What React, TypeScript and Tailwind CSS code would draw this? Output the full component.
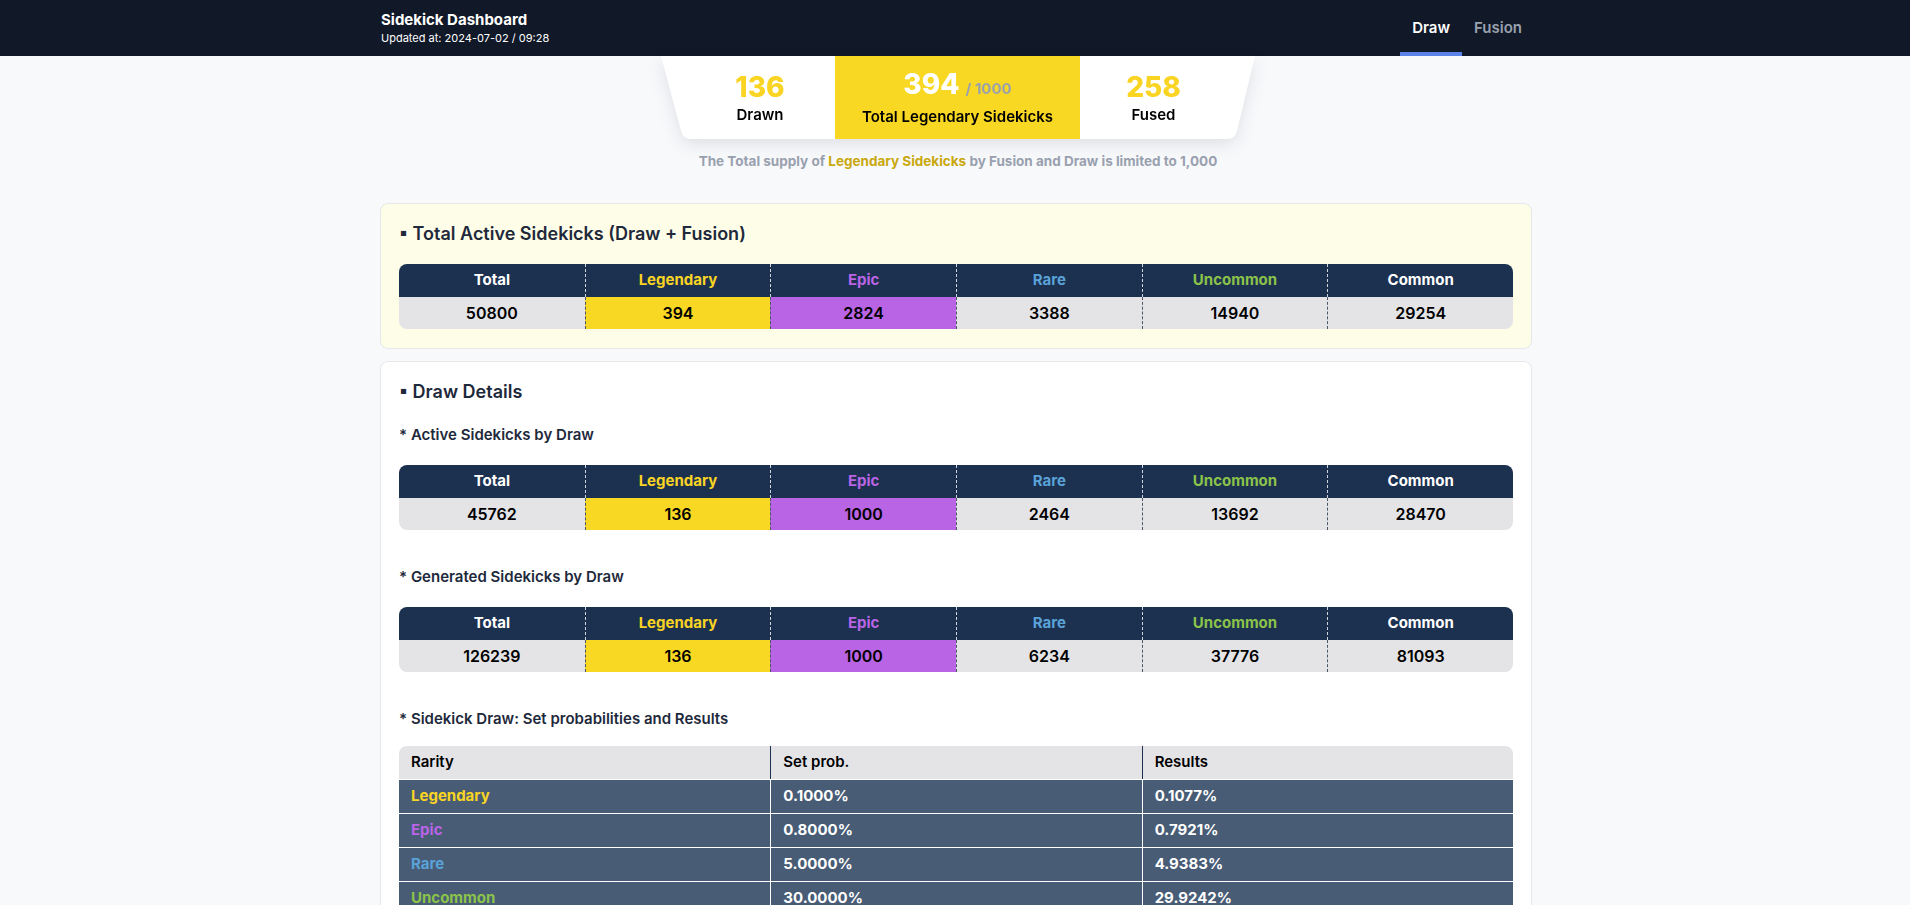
import React from 'react';

type Row = { total: number; legendary: number; epic: number; rare: number; uncommon: number; common: number };

const totalActive: Row = { total: 50800, legendary: 394, epic: 2824, rare: 3388, uncommon: 14940, common: 29254 };
const activeByDraw: Row = { total: 45762, legendary: 136, epic: 1000, rare: 2464, uncommon: 13692, common: 28470 };
const generatedByDraw: Row = { total: 126239, legendary: 136, epic: 1000, rare: 6234, uncommon: 37776, common: 81093 };

const probabilities = [
  { rarity: 'Legendary', color: 'text-[#f9d423]', set: '0.1000%', result: '0.1077%' },
  { rarity: 'Epic', color: 'text-[#b964e6]', set: '0.8000%', result: '0.7921%' },
  { rarity: 'Rare', color: 'text-[#5aa2d8]', set: '5.0000%', result: '4.9383%' },
  { rarity: 'Uncommon', color: 'text-[#8bc34a]', set: '30.0000%', result: '29.9242%' },
  { rarity: 'Common', color: 'text-white', set: '64.1000%', result: '64.2377%' },
];

function RarityTable({ row }: { row: Row }) {
  const head = 'flex h-[33px] items-center justify-center text-[15px] font-bold';
  const cell = 'flex h-[32px] items-center justify-center text-base font-semibold text-black';
  return (
    <div className="overflow-hidden rounded-lg">
      <div className="grid grid-cols-6 bg-[#1c3150]">
        <div className={`${head} text-white`}>Total</div>
        <div className={`${head} border-l border-dashed border-white/80 text-[#f9d423]`}>Legendary</div>
        <div className={`${head} border-l border-dashed border-white/80 text-[#b964e6]`}>Epic</div>
        <div className={`${head} border-l border-dashed border-white/80 text-[#5aa2d8]`}>Rare</div>
        <div className={`${head} border-l border-dashed border-white/80 text-[#8bc34a]`}>Uncommon</div>
        <div className={`${head} border-l border-dashed border-white/80 text-white`}>Common</div>
      </div>
      <div className="grid grid-cols-6 bg-[#e4e4e7]">
        <div className={cell}>{row.total}</div>
        <div className={`${cell} border-l border-dashed border-gray-600 bg-[#f9d823]`}>{row.legendary}</div>
        <div className={`${cell} border-l border-dashed border-gray-600 bg-[#b964e4]`}>{row.epic}</div>
        <div className={`${cell} border-l border-dashed border-gray-600`}>{row.rare}</div>
        <div className={`${cell} border-l border-dashed border-gray-600`}>{row.uncommon}</div>
        <div className={`${cell} border-l border-dashed border-gray-600`}>{row.common}</div>
      </div>
    </div>
  );
}

function SubHeading({ children, className = 'mb-5' }: { children: React.ReactNode; className?: string }) {
  return <h3 className={`text-[15px] font-semibold leading-5 text-[#1e293b] ${className}`}>* {children}</h3>;
}

export default function App() {
  return (
    <div className="min-h-screen bg-[#f8f9fb] font-['Inter',sans-serif] text-[#1e293b]">
      <header className="h-14 bg-[#111827]">
        <div className="mx-auto flex h-full w-[1158px] items-stretch justify-between pl-[5px]">
          <div className="flex flex-col justify-center">
            <h1 className="text-[15px] font-bold leading-5 text-white">Sidekick Dashboard</h1>
            <p className="text-[11px] leading-4 text-white">Updated at: 2024-07-02 / 09:28</p>
          </div>
          <nav className="flex items-stretch">
            <button className="flex items-center border-b-4 border-[#5a82e8] px-3 pt-1 text-[15px] font-semibold text-white">
              Draw
            </button>
            <button className="flex items-center border-b-4 border-transparent px-3 pt-1 text-[15px] font-semibold text-gray-400">
              Fusion
            </button>
          </nav>
        </div>
      </header>

      <div className="flex flex-col items-center">
        <div className="ml-[6px] drop-shadow-[0_6px_8px_rgba(15,23,42,0.10)]">
          <div className="grid h-[83px] w-[594px] grid-cols-[174px_245px_175px] bg-white [clip-path:path('M0_0H594L576_75Q574_83_566_83H30Q22_83_20_75Z')]">
            <div className="flex flex-col items-center justify-center pl-6">
              <span className="text-[28px] font-extrabold leading-8 text-[#f9d423]">136</span>
              <span className="mt-0.5 text-[15px] font-semibold leading-5 text-black">Drawn</span>
            </div>
            <div className="flex flex-col items-center justify-center bg-[#f9d823]">
              <span className="leading-8">
                <span className="text-[28px] font-extrabold text-white">394</span>
                <span className="ml-1.5 text-[15px] font-bold text-gray-400">/ 1000</span>
              </span>
              <span className="mt-0.5 text-[15px] font-semibold leading-5 text-black">Total Legendary Sidekicks</span>
            </div>
            <div className="flex flex-col items-center justify-center pr-7">
              <span className="text-[28px] font-extrabold leading-8 text-[#f9d423]">258</span>
              <span className="mt-0.5 text-[15px] font-semibold leading-5 text-black">Fused</span>
            </div>
          </div>
        </div>
        <p className="mt-3 ml-[6px] text-[13.5px] font-bold leading-5 text-gray-400">
          The Total supply of <span className="text-[#c9a80f]">Legendary Sidekicks</span> by Fusion and Draw is limited to 1,000
        </p>
      </div>

      <main className="mx-auto mt-8 w-[1154px] pb-10 pl-0.5">
        <section className="rounded-lg border border-gray-200 bg-[#fefde8] px-[18px] pb-[19px] pt-4">
          <h2 className="mb-4 text-lg font-semibold leading-7 text-[#1e293b]">▪ Total Active Sidekicks (Draw + Fusion)</h2>
          <RarityTable row={totalActive} />
        </section>

        <section className="mt-3 rounded-lg border border-gray-200 bg-white px-[18px] pb-6 pt-4">
          <h2 className="text-lg font-semibold leading-7 text-[#1e293b]">▪ Draw Details</h2>

          <div className="mt-[19px]">
            <SubHeading>Active Sidekicks by Draw</SubHeading>
            <RarityTable row={activeByDraw} />
          </div>

          <div className="mt-[37px]">
            <SubHeading>Generated Sidekicks by Draw</SubHeading>
            <RarityTable row={generatedByDraw} />
          </div>

          <div className="mt-[37px]">
            <SubHeading className="mb-[17px]">Sidekick Draw: Set probabilities and Results</SubHeading>
            <div className="overflow-hidden rounded-t-lg">
              <div className="grid h-[33px] grid-cols-3 bg-[#e4e4e7] text-[15px] font-semibold text-black">
                <div className="flex items-center px-3">Rarity</div>
                <div className="flex items-center border-l border-[#1c3150] px-3">Set prob.</div>
                <div className="flex items-center border-l border-[#1c3150] px-3">Results</div>
              </div>
              {probabilities.map((p) => (
                <div key={p.rarity} className="grid h-[34px] grid-cols-3 border-t border-white bg-[#485c75] text-[15px] font-bold text-white">
                  <div className={`flex items-center px-3 ${p.color}`}>{p.rarity}</div>
                  <div className="flex items-center border-l border-white px-3">{p.set}</div>
                  <div className="flex items-center border-l border-white px-3">{p.result}</div>
                </div>
              ))}
            </div>
          </div>
        </section>
      </main>
    </div>
  );
}
